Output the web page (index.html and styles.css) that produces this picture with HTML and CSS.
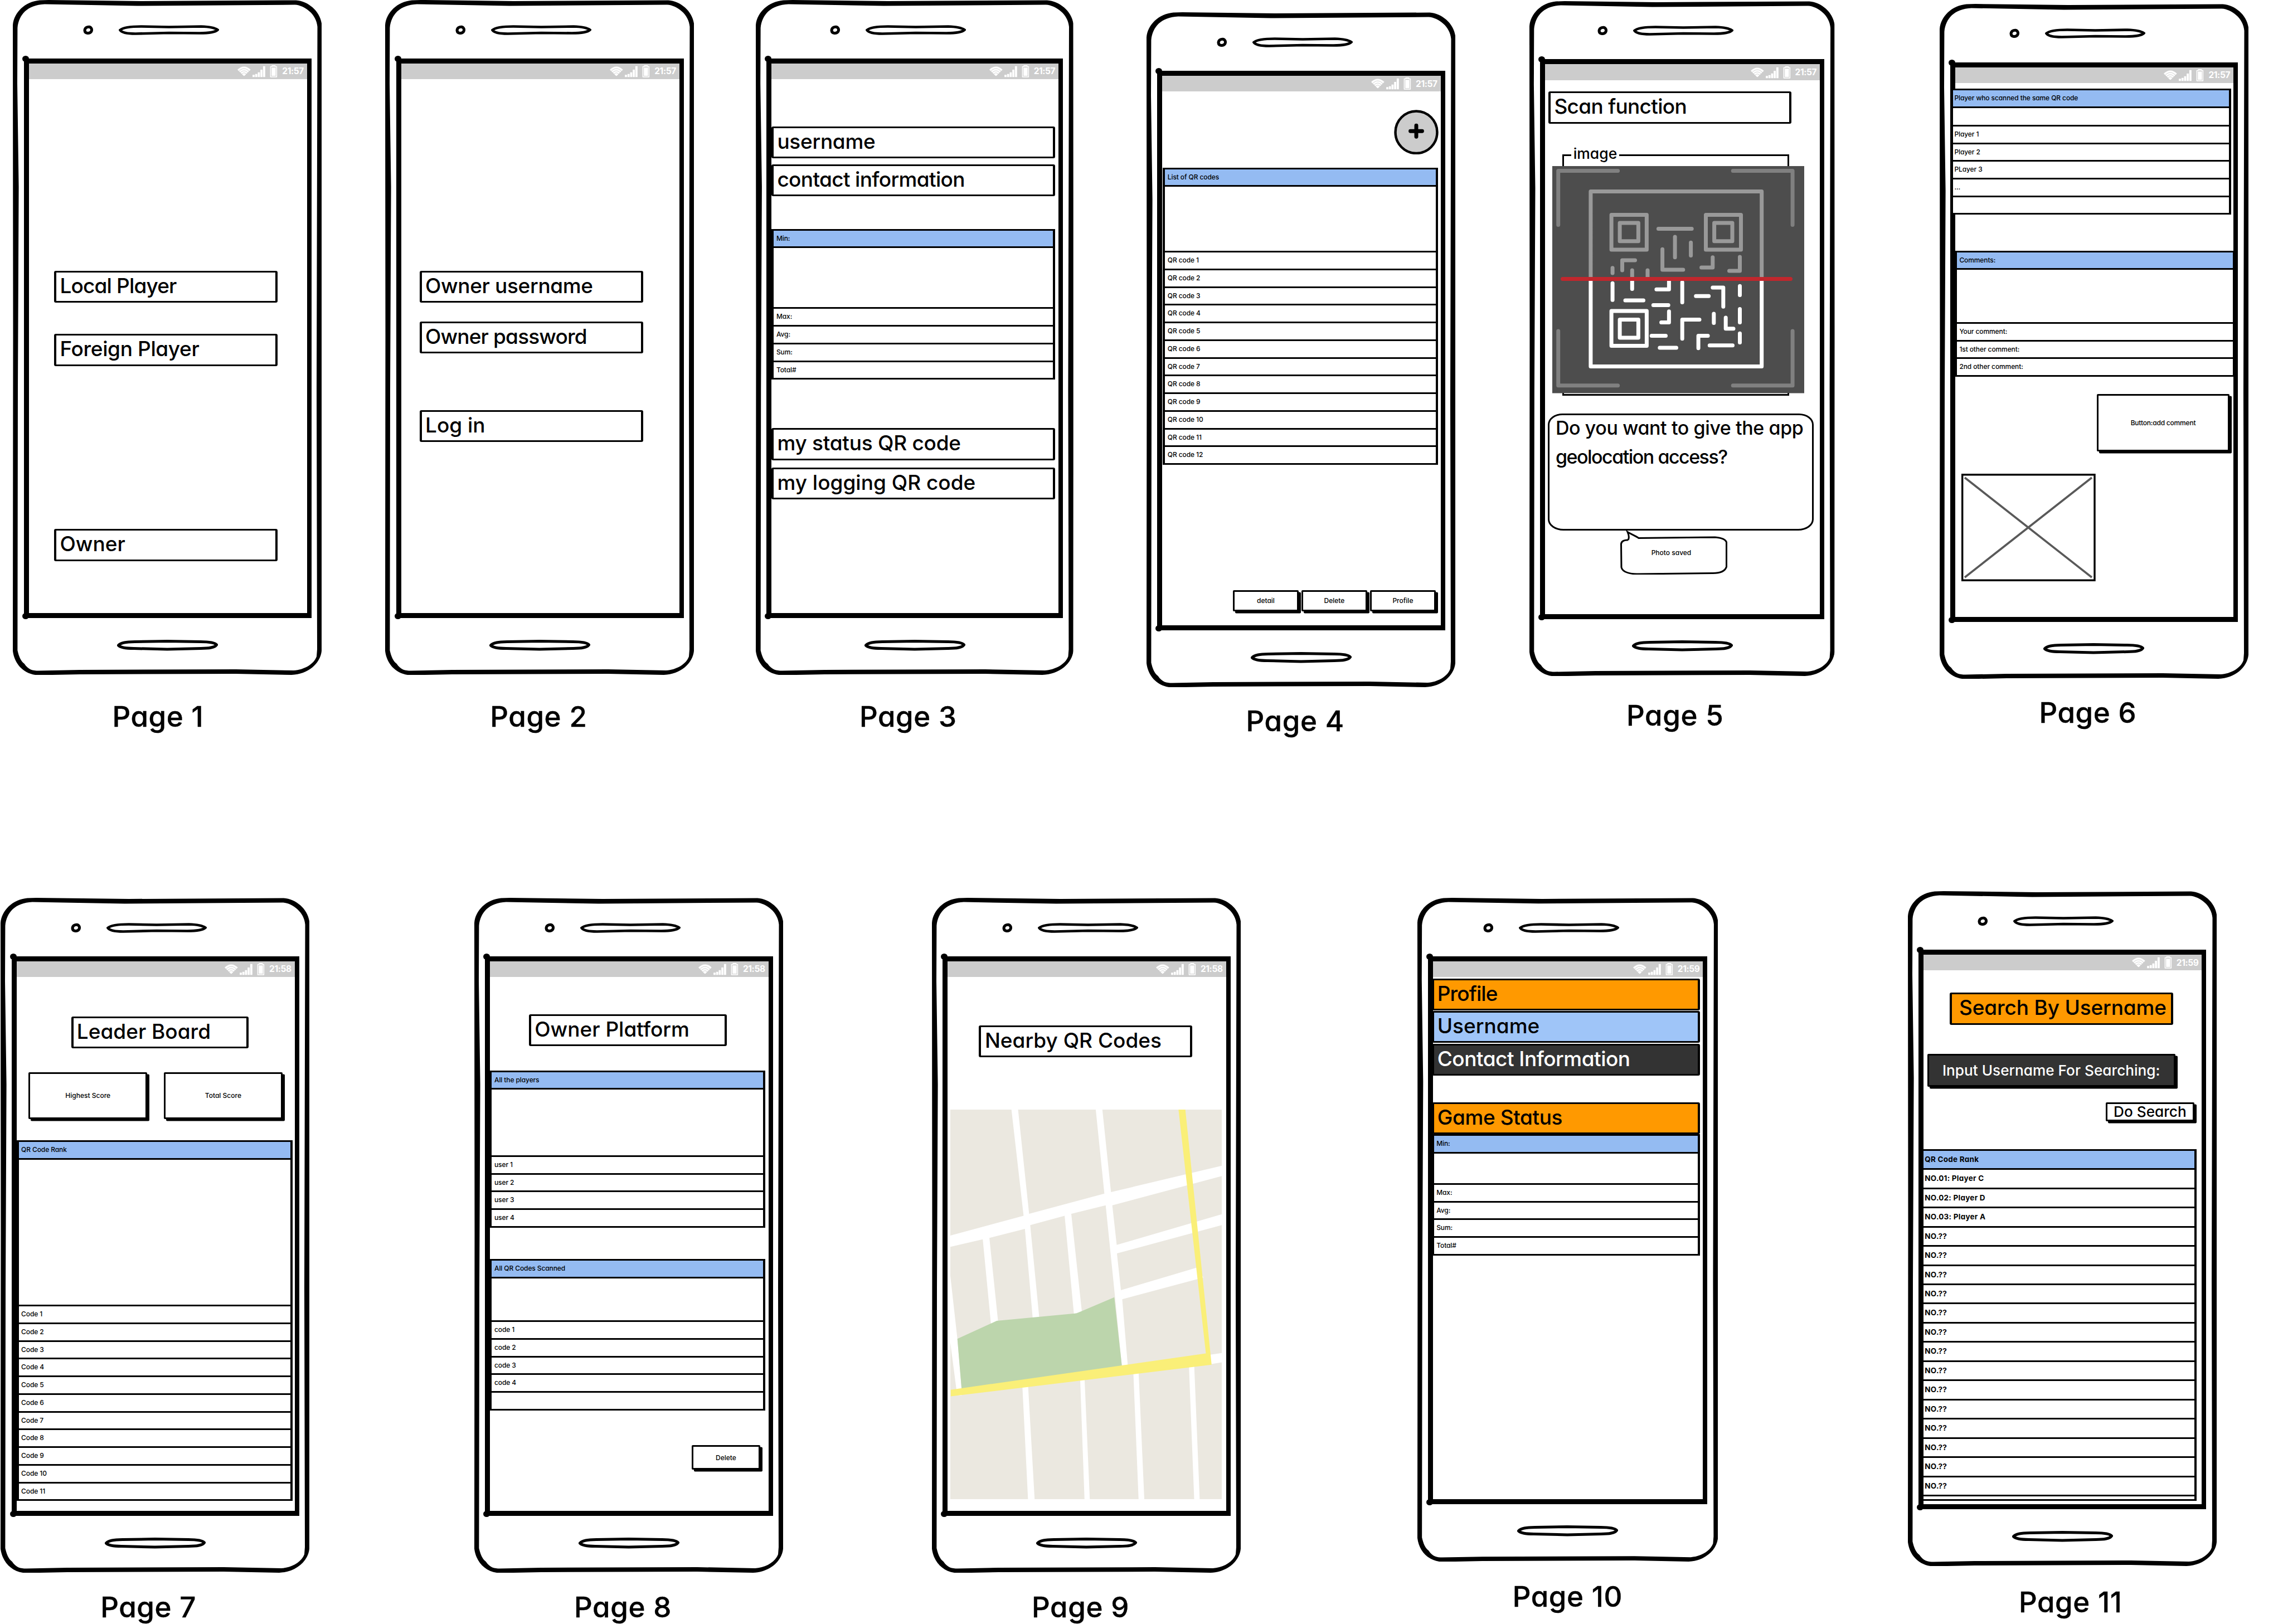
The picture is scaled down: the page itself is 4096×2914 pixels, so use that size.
FILE: index.html
```html
<!DOCTYPE html>
<html lang="en">
<head>
<meta charset="utf-8">
<title>QR game wireframes</title>
<link rel="stylesheet" href="styles.css">
</head>
<body>
<svg class="defs" aria-hidden="true">
  <symbol id="shell" viewBox="0 0 554 1211" preserveAspectRatio="none">
    <path fill-rule="evenodd" d="M0 45C2 22 22 3 48 .5L64 0 230 2 508 .5C530 2 551 20 554 42L554.5 600 554 1168C552 1190 530 1210 500 1211L400 1209 120 1210 45 1211.5C20 1210 3 1192 0 1168L.5 600ZM8.4 50 8 150 10.6 335 9 700 8.4 1167C11 1178 14 1186 20.700 1191 28 1202 36 1203.500 46 1203.500L120 1202 400 1201 504 1203C522 1202 540 1192 545 1178L546 1165 545 700 546.500 48C545 26 524 9.500 506 8.500L223 10.500 57 7.500C26 9 11 26 8.400 50Z"/>
  </symbol>
  <symbol id="camera" viewBox="0 0 18 18"><path d="M3 9.500C3.500 5 7 3 11 3.200 15 4 16.500 8 14.800 11.500 12 15.500 3.500 16 3 9.500Z" fill="none" stroke="#000" stroke-width="5"/></symbol>
  <symbol id="speaker" viewBox="0 0 180 18"><path d="M2.500 9C8 4 20 2.500 40 2.500L90 3.500 148 2.500C164 3 174 6 177.500 8.500 174 12 162 14.500 145 14.500L90 14 30 15.500C14 15.500 5 13 2.500 9Z" fill="none" stroke="#000" stroke-width="4.600"/></symbol>
  <symbol id="home" viewBox="0 0 181 20"><path d="M2.500 10C7 5 16 4 32 3.500L90 2.500 150 3.500C166 3.500 175 5 178.500 9 175 14 166 15.500 150 15.500L90 17 30 15.500C14 15.500 6 14 2.500 10Z" fill="none" stroke="#000" stroke-width="5"/></symbol>
  <symbol id="signals" viewBox="0 0 72 22">
    <path fill="#fff" d="M0 8C7 .500 16.700 .500 23.700 8L12.600 19Q11.850 19.700 11.100 19Z"/>
    <path fill="none" stroke="#ccc" stroke-width=".9" d="M2.500 11C8.500 4.500 15.200 4.500 21.200 11M5 13.600C9.500 8.900 14.200 8.900 18.700 13.600M7.500 16.200C10.500 13 13.200 13 16.200 16.200"/>
    <path fill="#fff" d="M27.100 17.300h3.800v3.900h-3.800zM31.800 15.700h3.800v5.500h-3.800zM36.500 12.700h3.800v8.500h-3.800zM41.200 7.900h3.800v13.300h-3.800zM45.900 1.700h3.900v19.500h-3.900z"/>
    <path fill="none" stroke="#fff" stroke-width="1.500" stroke-linejoin="round" d="M59.400 2.500h2.700V.8h5.600v1.700h2.700v18.600h-11z"/><path fill="#fff" d="M61.200 4.200h7.400v15h-7.400zM62.500 1h5v1.500h-5z"/>
  </symbol>
</svg>
<main class="board">

<figure class="phone p1"><div class="device">
  <svg class="shell"><use href="#shell"/></svg>
  <div class="top"><svg class="camera"><use href="#camera"/></svg><svg class="speaker"><use href="#speaker"/></svg></div>
  <div class="screen">
    <div class="status"><svg class="signals"><use href="#signals"/></svg><span>21:57</span></div>
    <div class="field local">Local Player</div>
    <div class="field foreign">Foreign Player</div>
    <div class="field owner">Owner</div>
  </div>
  <svg class="home"><use href="#home"/></svg>
</div><figcaption>Page 1</figcaption></figure>

<figure class="phone p2"><div class="device">
  <svg class="shell"><use href="#shell"/></svg>
  <div class="top"><svg class="camera"><use href="#camera"/></svg><svg class="speaker"><use href="#speaker"/></svg></div>
  <div class="screen">
    <div class="status"><svg class="signals"><use href="#signals"/></svg><span>21:57</span></div>
    <div class="field name">Owner username</div>
    <div class="field password">Owner password</div>
    <div class="field login">Log in</div>
  </div>
  <svg class="home"><use href="#home"/></svg>
</div><figcaption>Page 2</figcaption></figure>

<figure class="phone p3"><div class="device">
  <svg class="shell"><use href="#shell"/></svg>
  <div class="top"><svg class="camera"><use href="#camera"/></svg><svg class="speaker"><use href="#speaker"/></svg></div>
  <div class="screen">
    <div class="status"><svg class="signals"><use href="#signals"/></svg><span>21:57</span></div>
    <div class="field name">username</div>
    <div class="field contact">contact information</div>
    <div class="list">
      <div class="row head">Min:</div><div class="row blank"></div>
      <div class="row">Max:</div><div class="row">Avg:</div><div class="row">Sum:</div><div class="row">Total#</div>
    </div>
    <div class="field my-status">my status QR code</div>
    <div class="field my-logging">my logging QR code</div>
  </div>
  <svg class="home"><use href="#home"/></svg>
</div><figcaption>Page 3</figcaption></figure>

<figure class="phone p4"><div class="device">
  <svg class="shell"><use href="#shell"/></svg>
  <div class="top"><svg class="camera"><use href="#camera"/></svg><svg class="speaker"><use href="#speaker"/></svg></div>
  <div class="screen">
    <div class="status"><svg class="signals"><use href="#signals"/></svg><span>21:57</span></div>
    <svg class="add" viewBox="0 0 80 81"><ellipse cx="40" cy="40.500" rx="37.700" ry="38" fill="#ccc" stroke="#000" stroke-width="4.500"/><path d="M29.500 38.500H50.500M40 28.500V48.500" stroke="#000" stroke-width="7" stroke-linecap="round"/></svg>
    <div class="list">
      <div class="row head">List of QR codes</div><div class="row blank"></div>
      <div class="row">QR code 1</div><div class="row">QR code 2</div><div class="row">QR code 3</div><div class="row">QR code 4</div>
      <div class="row">QR code 5</div><div class="row">QR code 6</div><div class="row">QR code 7</div><div class="row">QR code 8</div>
      <div class="row">QR code 9</div><div class="row">QR code 10</div><div class="row">QR code 11</div><div class="row">QR code 12</div>
    </div>
    <div class="actions"><div class="button">detail</div><div class="button">Delete</div><div class="button">Profile</div></div>
  </div>
  <svg class="home"><use href="#home"/></svg>
</div><figcaption>Page 4</figcaption></figure>

<figure class="phone p5"><div class="device">
  <svg class="shell"><use href="#shell"/></svg>
  <div class="top"><svg class="camera"><use href="#camera"/></svg><svg class="speaker"><use href="#speaker"/></svg></div>
  <div class="screen">
    <div class="status"><svg class="signals"><use href="#signals"/></svg><span>21:57</span></div>
    <div class="field scan">Scan function</div>
    <div class="group"><span class="legend">image</span>
      <svg class="qr" viewBox="0 0 452.500 407.400">
        <path fill="#4d4d4d" d="M0 0H452.500V407.400H0z"/>
        <g fill="none" stroke-width="7" stroke-linecap="round" stroke-linejoin="round">
          <path stroke="#808080" d="M10.700 105.500V8.600H117.600M324.200 8.600H431.100V105.500M10.700 296V393.700H117.600M431.100 296V393.700H324.200"/>
          <path stroke="#999" d="M68.900 202.400V45.500H375.700V202.400M106.100 87.500H169.400V150.100H106.100ZM121.100 102H154.400V134.700H121.100ZM275.500 87.500H338.500V150.100H275.500ZM290.600 102H323V134.700H290.600ZM190.400 112.400H250.200M220.100 127V163.800M248.600 137.200V160.400M197.600 149.300V186.100H234.800M267.600 181.900H287.800V163.800M317.500 187.900H336.500V163M108.100 182.700V192.100M125.500 187V169H148.500M143.300 187V202M171 187V202"/>
          <path stroke="#fff" d="M68.900 205V359.400H375.700V205M106.100 259.900H169.400V322.500H106.100ZM121.100 275.400H154.400V308H121.100ZM108.100 210.200V240.200M143.300 205V220.500M131 241H163.500M186.900 221.300H209.400V203M181.300 249.600H208.200M195.600 280.500H209.400V260.800M178.200 304.500H203.500M192.800 326H222.500M233.200 208.400V244.500M257.700 233.300H280.700M287.800 217.900H306.800V252.200M233.200 309.700V275.400H264M289.800 265V281.400M311.200 271.900V291.700H325M262.100 326.800V304.500H279.100M282.300 321.700H323.500M336.500 215.300V231.600M336.500 256.500V280.500M336.500 300.200V316.500"/>
          <path stroke="#c1272d" d="M18.500 202.400H427.500"/>
        </g>
      </svg>
    </div>
    <div class="prompt"><span>Do you want to give the app</span><span class="second">geolocation access?</span></div>
    <div class="toast"><svg viewBox="0 0 192 79"><path d="M14 17C17 12 15 7 13 2.500 20 7 27 9 33 13.500L170 12C182 13 189 16 190.500 21L190.500 65C188 73 178 76.500 166 76.500L30 78C14 77.500 4 74 2 66L1.500 24C2 19 8 16.500 14 17" fill="#fff" stroke="#000" stroke-width="3"/></svg><span>Photo saved</span></div>
  </div>
  <svg class="home"><use href="#home"/></svg>
</div><figcaption>Page 5</figcaption></figure>

<figure class="phone p6"><div class="device">
  <svg class="shell"><use href="#shell"/></svg>
  <div class="top"><svg class="camera"><use href="#camera"/></svg><svg class="speaker"><use href="#speaker"/></svg></div>
  <div class="screen">
    <div class="status"><svg class="signals"><use href="#signals"/></svg><span>21:57</span></div>
    <div class="list players">
      <div class="row head">Player who scanned the same QR code</div><div class="row blank"></div>
      <div class="row">Player 1</div><div class="row">Player 2</div><div class="row">PLayer 3</div><div class="row">...</div><div class="row"></div>
    </div>
    <div class="list comments">
      <div class="row head">Comments:</div><div class="row blank"></div>
      <div class="row">Your comment:</div><div class="row">1st other comment:</div><div class="row">2nd other comment:</div>
    </div>
    <div class="button add-comment">Button:add comment</div>
    <svg class="placeholder" viewBox="0 0 241 193"><path d="M1.700 1.700H239V191.300H1.700Z" fill="#fff" stroke="#000" stroke-width="3.400"/><path d="M6 7 234 186M6 186 234 7" stroke="#595959" stroke-width="3.600"/></svg>
  </div>
  <svg class="home"><use href="#home"/></svg>
</div><figcaption>Page 6</figcaption></figure>

<figure class="phone p7"><div class="device">
  <svg class="shell"><use href="#shell"/></svg>
  <div class="top"><svg class="camera"><use href="#camera"/></svg><svg class="speaker"><use href="#speaker"/></svg></div>
  <div class="screen">
    <div class="status"><svg class="signals"><use href="#signals"/></svg><span>21:58</span></div>
    <div class="field title">Leader Board</div>
    <div class="actions"><div class="button">Highest Score</div><div class="button">Total Score</div></div>
    <div class="list">
      <div class="row head">QR Code Rank</div><div class="row blank"></div>
      <div class="row">Code 1</div><div class="row">Code 2</div><div class="row">Code 3</div><div class="row">Code 4</div>
      <div class="row">Code 5</div><div class="row">Code 6</div><div class="row">Code 7</div><div class="row">Code 8</div>
      <div class="row">Code 9</div><div class="row">Code 10</div><div class="row">Code 11</div>
    </div>
  </div>
  <svg class="home"><use href="#home"/></svg>
</div><figcaption>Page 7</figcaption></figure>

<figure class="phone p8"><div class="device">
  <svg class="shell"><use href="#shell"/></svg>
  <div class="top"><svg class="camera"><use href="#camera"/></svg><svg class="speaker"><use href="#speaker"/></svg></div>
  <div class="screen">
    <div class="status"><svg class="signals"><use href="#signals"/></svg><span>21:58</span></div>
    <div class="field title">Owner Platform</div>
    <div class="list players">
      <div class="row head">All the players</div><div class="row blank"></div>
      <div class="row">user 1</div><div class="row">user 2</div><div class="row">user 3</div><div class="row">user 4</div>
    </div>
    <div class="list codes">
      <div class="row head">All QR Codes Scanned</div><div class="row blank"></div>
      <div class="row">code 1</div><div class="row">code 2</div><div class="row">code 3</div><div class="row">code 4</div><div class="row"></div>
    </div>
    <div class="button delete">Delete</div>
  </div>
  <svg class="home"><use href="#home"/></svg>
</div><figcaption>Page 8</figcaption></figure>

<figure class="phone p9"><div class="device">
  <svg class="shell"><use href="#shell"/></svg>
  <div class="top"><svg class="camera"><use href="#camera"/></svg><svg class="speaker"><use href="#speaker"/></svg></div>
  <div class="screen">
    <div class="status"><svg class="signals"><use href="#signals"/></svg><span>21:58</span></div>
    <div class="field title">Nearby QR Codes</div>
    <svg class="map" viewBox="125 478 1230 826" preserveAspectRatio="none">
      <path fill="#ebe8e0" d="M125 478H1355V1304H125z"/>
      <g fill="#fff">
        <path d="M402 478H432L482 699 823 656 784 478H814L853 653 1355 597V619L859 681 879 765 1355 700V723L880 783 898 861 1242 813 1272 834 904 880 929 1020H902L868 860 829 681 673 699 721 906 685 911 643 703 487 723 528 919H498L463 731 302 750 341 926 309 932 272 753 125 769V745L457 703Z"/>
        <path d="M125 830 157 964 176 1068V1084H150L152 1069 125 972ZM1300 998 1355 994V1014L1300 1018ZM451 1060H477L507 1304H477ZM713 1045H733L757 1304H733ZM954 1032H978L1004 1304H978ZM1206 1018H1230L1255 1304H1230Z"/>
      </g>
      <path fill="#bcd5ac" d="M157 964 335 926 697 910 868 876 903 1024 176 1070Z"/>
      <path fill="#faef78" d="M1159 478H1190L1309 1019 127 1086V1072L1283 995Z"/>
    </svg>
  </div>
  <svg class="home"><use href="#home"/></svg>
</div><figcaption>Page 9</figcaption></figure>

<figure class="phone p10"><div class="device">
  <svg class="shell"><use href="#shell"/></svg>
  <div class="top"><svg class="camera"><use href="#camera"/></svg><svg class="speaker"><use href="#speaker"/></svg></div>
  <div class="screen">
    <div class="status"><svg class="signals"><use href="#signals"/></svg><span>21:59</span></div>
    <div class="field profile orange">Profile</div>
    <div class="field name blue">Username</div>
    <div class="field contact dark">Contact Information</div>
    <div class="field game orange">Game Status</div>
    <div class="list">
      <div class="row head">Min:</div><div class="row blank"></div>
      <div class="row">Max:</div><div class="row">Avg:</div><div class="row">Sum:</div><div class="row">Total#</div>
    </div>
  </div>
  <svg class="home"><use href="#home"/></svg>
</div><figcaption>Page 10</figcaption></figure>

<figure class="phone p11"><div class="device">
  <svg class="shell"><use href="#shell"/></svg>
  <div class="top"><svg class="camera"><use href="#camera"/></svg><svg class="speaker"><use href="#speaker"/></svg></div>
  <div class="screen">
    <div class="status"><svg class="signals"><use href="#signals"/></svg><span>21:59</span></div>
    <div class="field title orange">Search By Username</div>
    <div class="button input dark">Input Username For Searching:</div>
    <div class="button search">Do Search</div>
    <div class="list">
      <div class="row head">QR Code Rank</div>
      <div class="row">NO.01: Player C</div><div class="row">NO.02: Player D</div><div class="row">NO.03: Player A</div>
      <div class="row">NO.??</div><div class="row">NO.??</div><div class="row">NO.??</div><div class="row">NO.??</div><div class="row">NO.??</div>
      <div class="row">NO.??</div><div class="row">NO.??</div><div class="row">NO.??</div><div class="row">NO.??</div><div class="row">NO.??</div>
      <div class="row">NO.??</div><div class="row">NO.??</div><div class="row">NO.??</div><div class="row">NO.??</div>
      <div class="row blank"></div>
    </div>
  </div>
  <svg class="home"><use href="#home"/></svg>
</div><figcaption>Page 11</figcaption></figure>

</main>
</body>
</html>
```
FILE: styles.css
```css
* { box-sizing: border-box; }
body { margin: 0; background: #fff; color: #000; font-family: Inter, "Open Sans", sans-serif; font-weight: 500; font-feature-settings: "cv11" 1, "calt" 0; }
svg { display: block; }
.defs { position: absolute; width: 0; height: 0; }
.board { position: relative; width: 4096px; height: 2914px; overflow: hidden; }

/* Phones sit freely on the canvas */
.phone { position: absolute; margin: 0; width: 554px; }
.p1 { left: 23.4px; top: 0; --label: 178px; --drop: 45px; }
.p2 { left: 691.3px; top: 0; --label: 188px; --drop: 45px; }
.p3 { left: 1356px; top: 0; width: 569.7px; --label: 186px; --drop: 45px; }
.p4 { left: 2057.1px; top: 22.3px; --label: 178.5px; --drop: 30.6px; }
.p5 { left: 2744.1px; top: 1.7px; width: 547.5px; --label: 174px; --drop: 41px; }
.p6 { left: 3479.5px; top: 6.9px; --label: 179px; --drop: 31px; }
.p7 { left: 1.2px; top: 1611.1px; --label: 179px; --drop: 31.5px; }
.p8 { left: 851.1px; top: 1611.1px; --label: 179px; --drop: 31.5px; }
.p9 { left: 1672.1px; top: 1611.1px; --label: 179px; --drop: 31.5px; }
.p10 { left: 2542.7px; top: 1611.1px; width: 539.2px; --label: 171px; --drop: 33.4px; }
.p11 { left: 3422.9px; top: 1599.2px; --label: 199px; --drop: 35px; }

.device { position: relative; height: 1211px; padding: 0 18.5px 0 19.4px; display: flex; flex-direction: column; }
.p10 .device { height: 1191px; }
.shell { position: absolute; left: 0; top: 0; width: 100%; height: 100%; }
.top { height: 104.7px; flex: none; display: flex; justify-content: center; gap: 46px; padding: 44.500px 60px 0 0; }
.camera { width: 18px; height: 18px; }
.speaker { width: 180px; height: 18px; }
.home { width: 181px; height: 20px; margin: 38.5px auto 0; }
figcaption { margin-top: var(--drop); padding-left: var(--label); font-size: 51px; line-height: 60px; white-space: nowrap; font-weight: 500; letter-spacing: .6px; -webkit-text-stroke: .4px #000; }

.screen { position: relative; flex: none; height: 1004.4px; border: solid #000; border-width: 9.4px 8.5px 9px 9.6px; display: flex; flex-direction: column; align-items: flex-start; }
.p10 .screen { height: 983.2px; }
.screen::before, .screen::after { content: ""; position: absolute; left: -12px; width: 12px; height: 11px; border-radius: 50%; background: #000; }
.screen::before { top: -14px; }
.screen::after { bottom: -11px; }
.status { flex: none; align-self: stretch; height: 28.3px; margin-bottom: .9px; background: #ccc; color: #fff; display: flex; justify-content: flex-end; align-items: center; gap: 8px; padding-right: 6px; font-size: 15.5px; font-weight: 700; letter-spacing: -.4px; }
.signals { width: 72px; height: 22px; }

.field { flex: none; width: 401px; height: 57.5px; border: 3px solid #000; border-width: 3px 4px; border-radius: 3px; background: #fff; padding: 0 0 5px 6px; font-size: 37px; line-height: 47px; white-space: nowrap; letter-spacing: var(--track, 0); }
.orange { background: #f90; }
.blue { background: #9fc5f8; }
.dark { background: #333; color: #fff; }

.list { position: relative; flex: none; width: 494px; border: solid #000; border-width: 0 4px 3px; background: #fff; --row: 31.74px; }
.row { height: var(--row); border-top: 3px solid #000; padding-left: 4.500px; font-size: 12px; line-height: 28px; white-space: nowrap; letter-spacing: -.1px; }
.head { background: #94bbf2; }
.blank { height: var(--blank); }

.button { flex: none; border: 3px solid #000; border-radius: 2px; box-shadow: 4px 3.5px 0 #000; background: #fff; font-size: 12px; display: flex; align-items: center; justify-content: center; white-space: nowrap; }
.button.dark { background: #333; }
.actions { display: flex; }

.p1 .field { margin-left: 45.7px; }
.p1 .local { margin-top: 343.1px; --track: -.85px; }
.p1 .foreign { margin-top: 55.8px; --track: -.37px; }
.p1 .owner { margin-top: 292.4px; }

.p2 .field { margin-left: 33.3px; }
.p2 .name { margin-top: 343.1px; --track: -.35px; }
.p2 .password { margin-top: 33.5px; --track: -.85px; }
.p2 .login { margin-top: 101.1px; }

.p3 .field, .p3 .list { width: 508.5px; }
.p3 .name { margin-top: 84.1px; --track: -.3px; }
.p3 .contact { margin-top: 10.2px; --track: -.65px; }
.p3 .list { margin-top: 58.4px; --blank: 109.1px; }
.p3 .my-status { margin-top: 86.9px; --track: -.25px; }
.p3 .my-logging { margin-top: 12.8px; }

.add { flex: none; width: 80px; height: 80.5px; margin: 31.7px 0 0 415.3px; }
.p4 .list { margin: 23.3px 0 0 .8px; --blank: 117.8px; }
.p4 .actions { margin: 224.8px 0 0 126.7px; gap: 5.500px; }
.p4 .button { width: 117.5px; height: 38px; }

.p5 .scan { width: 436px; margin: 19.7px 0 0 5.9px; --track: -.7px; }
.group { position: relative; flex: none; width: 406.6px; height: 433px; margin: 55px 0 0 30.9px; border: 3.500px solid #000; }
.legend { position: absolute; left: 12.8px; top: -20px; width: 85.5px; background: #fff; text-align: center; font-size: 26.5px; line-height: 30px; }
.qr { width: 452.5px; height: 407.4px; margin: 18.4px 0 0 -21.6px; }
.prompt { flex: none; width: 477px; height: 210px; margin: 32.7px 0 0 4.4px; border: 3px solid #000; border-radius: 26px 26px 28px 28px / 20px 20px 20px 20px; padding: 0 0 0 11px; display: flex; flex-direction: column; font-size: 34px; line-height: 51px; white-space: nowrap; letter-spacing: -.4px; }
.prompt span { margin-top: -3px; }
.prompt .second { margin-top: 1px; letter-spacing: -1.5px; }
.toast { position: relative; flex: none; width: 192px; height: 79px; margin: 0 0 0 135px; padding: 32px 10px 0 0; text-align: center; font-size: 12px; line-height: 15px; }
.toast svg { position: absolute; left: 0; top: 0; width: 192px; height: 79px; }
.toast span { position: relative; }

.p6 .players { width: 503.5px; margin: 9.4px 0 0 -8px; --blank: 32.9px; }
.p6 .players .row { padding-left: 2.500px; }
.p6 .comments { width: 503.5px; margin: 64.3px 0 0 -1px; --blank: 96.5px; }
.add-comment { width: 238.6px; height: 103px; margin: 31.3px 0 0 253.8px; letter-spacing: -.2px; }
.placeholder { flex: none; width: 241px; height: 193px; margin: 40px 0 0 11.5px; }

.p7 .title { width: 318px; margin: 69.9px 0 0 98.2px; }
.p7 .actions { margin: 42.3px 0 0 21.8px; gap: 30px; }
.p7 .button { width: 212.7px; height: 84.5px; }
.p7 .list { margin: 38.3px 0 0 0; width: 495px; --blank: 263px; }

.p8 .title { width: 355px; margin: 65.7px 0 0 69.7px; }
.p8 .players { margin: 43.5px 0 0 -1px; width: 495px; --blank: 120.5px; }
.p8 .codes { margin: 56px 0 0 -1px; width: 495px; --blank: 78.6px; }
.delete { width: 123px; height: 44px; margin: 62.4px 0 0 361.5px; }

.p9 .title { width: 383px; margin: 86px 0 0 55.4px; padding-left: 7px; }
.map { flex: none; width: 487px; height: 699px; margin: 93.1px 0 0 4.500px; }

.p10 .field, .p10 .list { width: 481px; margin-left: -2.4px; }
.p10 .field { height: 57.2px; }
.p10 .profile { margin-top: 2.2px; --track: -.9px; }
.p10 .name { margin-top: .3px; }
.p10 .contact { margin-top: 2.1px; --track: -.5px; }
.p10 .game { margin-top: 47.7px; --track: -.4px; }
.p10 .list { margin-top: .4px; --blank: 55.7px; }

.p11 .title { margin: 39.4px 0 0 46.7px; padding-left: 13px; --track: -.15px; }
.input { width: 444.6px; height: 59px; margin: 52.5px 0 0 6.7px; font-size: 26.2px; }
.search { width: 159px; height: 33.8px; margin: 27.3px 0 0 326.6px; font-size: 26.2px; }
.p11 .list { width: 493.3px; margin: 50.2px 0 0 -4px; --row: 34.47px; --blank: 8px; }
.p11 .row { padding-left: 2px; font-size: 13.5px; font-weight: 700; line-height: 31px; letter-spacing: .25px; }
```
